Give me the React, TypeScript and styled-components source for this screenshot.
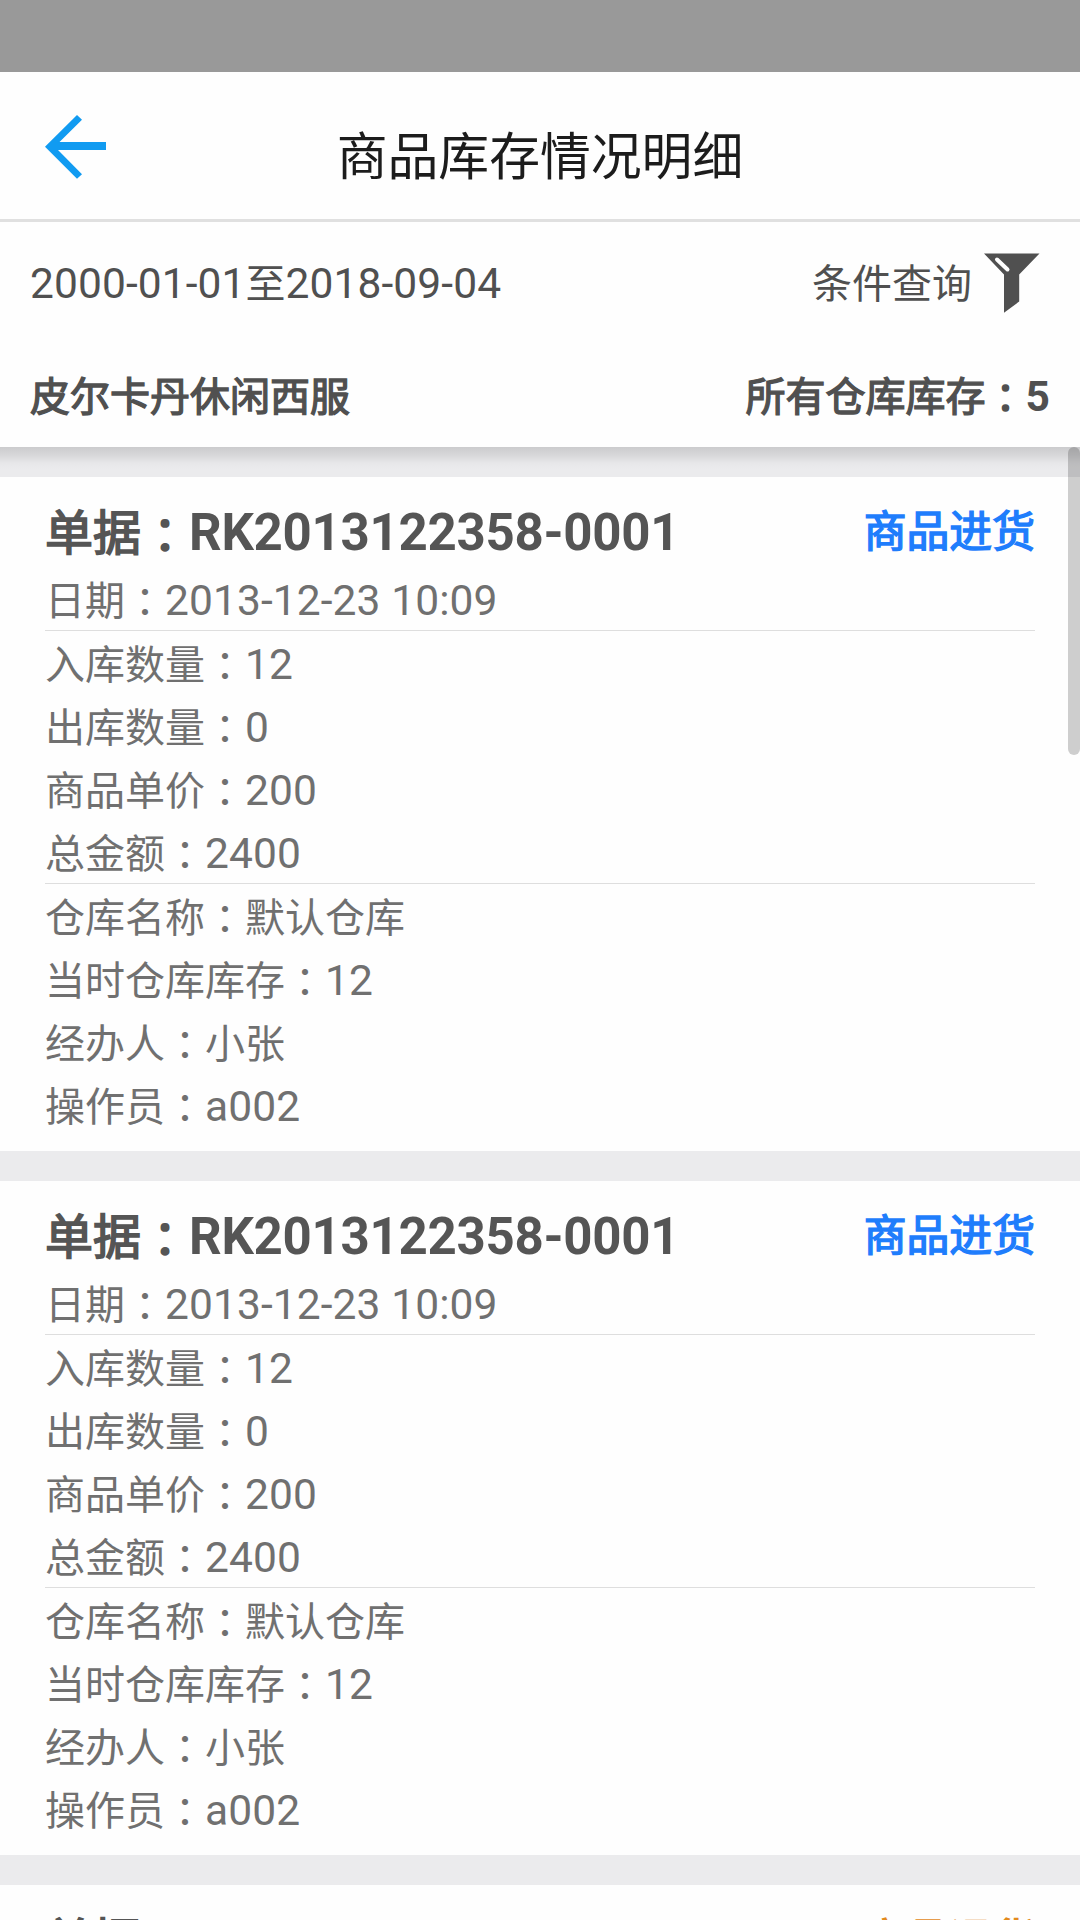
import React from "react";
import styled, { createGlobalStyle, css } from "styled-components";

const GlobalStyle = createGlobalStyle`
  * { box-sizing: border-box; }
  html, body { margin: 0; padding: 0; background: #fefefe; }
  body { overflow: hidden; font-family: Roboto, "Noto Sans CJK SC", sans-serif; }
`;

const Screen = styled.div`
  display: flex;
  flex-direction: column;
  width: 1080px;
  height: 1920px;
  overflow: hidden;
  background: #ebebed;
`;

const StatusBar = styled.div`
  flex: none;
  height: 72px;
  background: #999999;
`;

const Header = styled.header`
  flex: none;
  display: grid;
  grid-template-columns: 152px 1fr 152px;
  align-items: center;
  height: 150px;
  border-bottom: 3px solid #e0e0e0;
  background: #fefefe;
`;

const BackButton = styled.button`
  display: flex;
  padding: 2px 0 0 45px;
  border: 0;
  background: none;
`;

const Title = styled.h1`
  margin: 24px 0 0;
  text-align: center;
  font-weight: 400;
  color: #1c1c1c;
`;

const Summary = styled.section`
  position: relative;
  z-index: 1;
  flex: none;
  height: 225px;
  padding: 5px 30px 0;
  background: #fefefe;
  color: #505050;
`;

const SummaryRow = styled.div<{ $bold?: boolean }>`
  display: flex;
  align-items: center;
  justify-content: space-between;
  height: 113px;
  font-weight: ${(p) => (p.$bold ? 700 : 400)};
`;

const FilterButton = styled.div`
  display: flex;
  align-items: center;
  gap: 12px;
  padding-right: 10px;

  svg {
    margin-bottom: 2px;
  }
`;

const List = styled.main`
  position: relative;
  flex: 1;
  min-height: 0;
  overflow: hidden;
  display: flex;
  flex-direction: column;
  gap: 30px;
  padding-top: 30px;
  background: linear-gradient(#cbcbcd, #d9d9db 9px, #e7e7e9 16px, #ebebed 22px);
`;

const Card = styled.article`
  flex: none;
  padding: 15px 45px;
  background: #fefefe;
`;

const CardHead = styled.div`
  display: flex;
  align-items: center;
  justify-content: space-between;
  height: 75px;
  padding-top: 6px;
  color: #555555;
  font-weight: 700;
`;

const Kind = styled.span<{ $color: string }>`
  color: ${(p) => p.$color};
`;

const Group = styled.div`
  color: #707070;
  & + & {
    border-top: 1px solid #dedede;
  }
`;

const Row = styled.div`
  display: flex;
  align-items: center;
  height: 63px;
  padding-top: 4px;
`;

const Thumb = styled.div`
  position: absolute;
  top: 0;
  right: 0;
  width: 12px;
  height: 308px;
  border-radius: 6px;
  background: rgba(0, 0, 0, 0.19);
`;

const Line = styled.span<{ $size: number }>`
  font-size: ${(p) => p.$size}px;
  line-height: 1.2;
  white-space: pre;
`;

const Latin = styled.span<{ $spacing: number }>`
  font-family: Roboto, sans-serif;
  letter-spacing: ${(p) => p.$spacing}px;
`;

const Han = styled.span<{ $bold?: boolean }>`
  font-family: "Noto Sans CJK SC", sans-serif;
  font-size: 0.9412em;
  line-height: 1;
  font-weight: 400;
  ${(p) =>
    p.$bold &&
    css`
      -webkit-text-stroke: 0.034em currentColor;
    `}
`;

const Colon = styled(Han)`
  font-family: "Noto Sans CJK TC", sans-serif;
  line-height: 0;
  vertical-align: -0.055em;
`;

type TextProps = { size?: number; bold?: boolean; spacing?: number; children: string };

/* Han glyphs are set slightly smaller than the digits; the full-width colon is centred in its cell. */
function Text({ size = 42.5, bold, spacing = 0.1, children }: TextProps) {
  const parts = children.match(/：|[\x20-\x7e]+|[^\x20-\x7e：]+/g) || [];
  return (
    <Line $size={size}>
      {parts.map((part, i) => {
        if (part === "：") return <Colon key={i} lang="zh-Hant" $bold={bold}>{part}</Colon>;
        if (/^[\x20-\x7e]/.test(part)) return <Latin key={i} $spacing={spacing}>{part}</Latin>;
        return <Han key={i} lang="zh-Hans" $bold={bold}>{part}</Han>;
      })}
    </Line>
  );
}

const BackIcon = () => (
  <svg width="62" height="64" viewBox="45 115 62 64">
    <path d="M45 146.8 L77 115 L82 119.7 L59.5 142 H106 V150 H58 L82 174.2 L77 178.8 Z" fill="#119bf1" />
  </svg>
);

const FunnelIcon = () => (
  <svg width="56" height="60" viewBox="984.5 252.5 56 60">
    <path d="M984.5 253 H1040 L1019.7 274 V301 L1004.5 312.2 V274 Z" fill="#505050" />
    <path d="M997.5 259 L1008 269" stroke="#fefefe" strokeWidth="4" strokeLinecap="round" />
  </svg>
);

const BLUE = "#1f7dfc";
const ORANGE = "#e38a1c";

const details = [
  ["日期：2013-12-23 10:09"],
  ["入库数量：12", "出库数量：0", "商品单价：200", "总金额：2400"],
  ["仓库名称：默认仓库", "当时仓库库存：12", "经办人：小张", "操作员：a002"],
];

const records: { kind: string; color: string; groups: string[][] }[] = [
  { kind: "商品进货", color: BLUE, groups: details },
  { kind: "商品进货", color: BLUE, groups: details },
  { kind: "商品退货", color: ORANGE, groups: [] },
];

export default function App() {
  return (
    <>
      <GlobalStyle />
      <Screen>
        <StatusBar />
        <Header>
          <BackButton aria-label="返回"><BackIcon /></BackButton>
          <Title><Text size={54}>商品库存情况明细</Text></Title>
        </Header>
        <Summary>
          <SummaryRow>
            <Text>2000-01-01至2018-09-04</Text>
            <FilterButton>
              <Text>条件查询</Text>
              <FunnelIcon />
            </FilterButton>
          </SummaryRow>
          <SummaryRow $bold>
            <Text bold>皮尔卡丹休闲西服</Text>
            <Text bold>所有仓库库存：5</Text>
          </SummaryRow>
        </Summary>
        <List>
          {records.map((record, i) => (
            <Card key={i}>
              <CardHead>
                <Text size={51} bold spacing={-0.27}>单据：RK2013122358-0001</Text>
                <Kind $color={record.color}><Text size={45.5} bold>{record.kind}</Text></Kind>
              </CardHead>
              {record.groups.map((rows, g) => (
                <Group key={g}>
                  {rows.map((row) => (
                    <Row key={row}><Text>{row}</Text></Row>
                  ))}
                </Group>
              ))}
            </Card>
          ))}
          <Thumb />
        </List>
      </Screen>
    </>
  );
}
